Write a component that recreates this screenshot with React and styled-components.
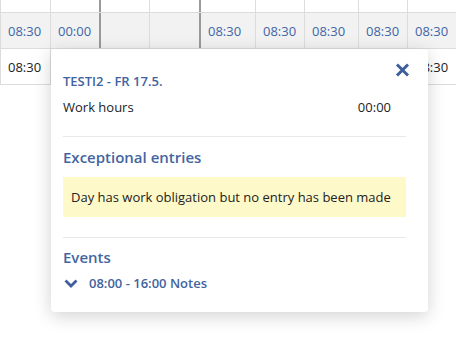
import React from "react";
import styled, { createGlobalStyle } from "styled-components";

const Global = createGlobalStyle`
  html, body { margin: 0; padding: 0; background: #fff; }
  body { font-family: "Open Sans", "Noto Sans", Arial, sans-serif; overflow: hidden; }
  * { box-sizing: border-box; }
`;

const Page = styled.div`
  position: relative;
  width: 456px;
  height: 337px;
  overflow: hidden;
`;

const Table = styled.div`
  display: flex;
  flex-direction: column;
  border-left: 1px solid #dcdcdc;
  width: 470px;
`;

const Row = styled.div`
  display: flex;
  height: ${(p) => p.$h}px;
  background: ${(p) => (p.$head ? "#f2f2f2" : "#fff")};
  border-bottom: 1px solid #dcdcdc;
`;

const Cell = styled.div`
  flex: 0 0 ${(p) => p.$w}px;
  border-right: ${(p) => (p.$thick ? "2px solid #9a9a9a" : "1px solid #dcdcdc")};
  padding-left: 7px;
  display: flex;
  align-items: center;
  font-size: 13px;
  color: ${(p) => (p.$head ? "#3f65a6" : "#222")};
`;

const Popup = styled.div`
  position: absolute;
  left: 51px;
  top: 49px;
  width: 377px;
  background: #fff;
  border-radius: 4px;
  box-shadow: 0 4px 18px rgba(0, 0, 0, 0.18);
  padding: 23px 22px 20px 12px;
  display: flex;
  flex-direction: column;
`;

const Close = styled.button`
  position: absolute;
  top: 13px;
  right: 18px;
  width: 16px;
  height: 15px;
  padding: 0;
  border: none;
  background: none;
  display: flex;
  align-items: center;
  justify-content: center;
`;

const Title = styled.div`
  font-size: 13px;
  font-weight: 600;
  line-height: 18px;
  color: #41639e;
`;

const InfoRow = styled.div`
  margin-top: 8px;
  display: flex;
  justify-content: space-between;
  padding-right: 15px;
  font-size: 13px;
  line-height: 18px;
  color: #222;
`;

const Divider = styled.div`
  height: 1px;
  background: #e8e8e8;
  margin-top: ${(p) => p.$mt}px;
`;

const SectionTitle = styled.div`
  margin-top: ${(p) => p.$mt}px;
  font-size: 15px;
  font-weight: 600;
  line-height: 20px;
  color: #44659f;
`;

const Warning = styled.div`
  margin-top: 10px;
  height: 40px;
  background: #fef9c9;
  padding: 0 8px;
  display: flex;
  align-items: center;
  font-size: 13px;
  color: #222;
`;

const EventRow = styled.div`
  margin-top: 7px;
  display: flex;
  align-items: center;
  gap: 11px;
  font-size: 13px;
  font-weight: 600;
  line-height: 18px;
  color: #41639e;
  padding-left: 1px;
`;

const widths = [50, 50, 49, 51, 55, 49, 54, 49, 60];
const thick = [false, true, false, true, false, false, false, false, false];
const head = ["08:30", "00:00", "", "", "08:30", "08:30", "08:30", "08:30", "08:30"];
const body = ["08:30", "", "", "", "", "", "", "", "08:30"];

export default function App() {
  return (
    <Page>
      <Global />
      <Table>
        <Row $h={13}>
          {widths.map((w, i) => (
            <Cell key={i} $w={w} $thick={thick[i]} />
          ))}
        </Row>
        <Row $h={36} $head>
          {widths.map((w, i) => (
            <Cell key={i} $w={w} $thick={thick[i]} $head>
              {head[i]}
            </Cell>
          ))}
        </Row>
        <Row $h={36}>
          {widths.map((w, i) => (
            <Cell key={i} $w={w} $thick={thick[i]}>
              {body[i]}
            </Cell>
          ))}
        </Row>
      </Table>
      <Popup>
        <Close aria-label="Close">
          <svg width="15" height="14" viewBox="0 0 15 14">
            <path d="M2 1.5 L13 12.5 M13 1.5 L2 12.5" stroke="#3e5f9b" strokeWidth="3" strokeLinecap="butt" />
          </svg>
        </Close>
        <Title>TESTI2 - FR 17.5.</Title>
        <InfoRow>
          <span>Work hours</span>
          <span>00:00</span>
        </InfoRow>
        <Divider $mt={20} />
        <SectionTitle $mt={10}>Exceptional entries</SectionTitle>
        <Warning>Day has work obligation but no entry has been made</Warning>
        <Divider $mt={20} />
        <SectionTitle $mt={9}>Events</SectionTitle>
        <EventRow>
          <svg width="14" height="9" viewBox="0 0 14 9">
            <path d="M1.5 1.5 L7 7 L12.5 1.5" stroke="#3e5f9b" strokeWidth="2.8" fill="none" />
          </svg>
          <span>08:00 - 16:00 Notes</span>
        </EventRow>
      </Popup>
    </Page>
  );
}
